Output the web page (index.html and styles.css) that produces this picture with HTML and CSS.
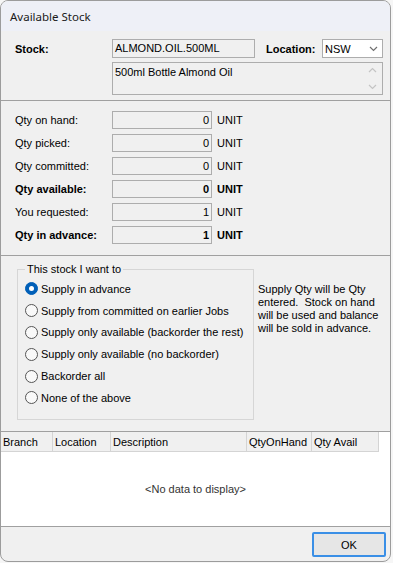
FILE: index.html
```html
<!DOCTYPE html>
<html>

<head>
    <title>Available Stock</title>
    <link rel="stylesheet" href="styles.css">
</head>

<body>
    <div class="window">
        <div class="titlebar">Available Stock</div>

        <div class="panel stock-panel">
            <div class="stock-row">
                <span class="label bold">Stock:</span>
                <div class="field stock-code">ALMOND.OIL.500ML</div>
                <span class="bold loc-label">Location:</span>
                <div class="select">
                    <span>NSW</span>
                    <svg width="9" height="6" viewBox="0 0 9 6"><polyline points="1,1 4.5,4.5 8,1" fill="none" stroke="#707070" stroke-width="1.2"/></svg>
                </div>
            </div>
            <div class="memo">
                <div class="memo-text">500ml Bottle Almond Oil</div>
                <div class="memo-scroll">
                    <svg width="9" height="6" viewBox="0 0 9 6"><polyline points="1,5 4.5,1.5 8,5" fill="none" stroke="#c4c4c4" stroke-width="1.2"/></svg>
                    <svg width="9" height="6" viewBox="0 0 9 6"><polyline points="1,1 4.5,4.5 8,1" fill="none" stroke="#c4c4c4" stroke-width="1.2"/></svg>
                </div>
            </div>
        </div>

        <div class="panel qty-panel">
            <div class="qty-row">
                <span class="label">Qty on hand:</span>
                <div class="field qty">0</div>
                <span class="unit">UNIT</span>
            </div>
            <div class="qty-row">
                <span class="label">Qty picked:</span>
                <div class="field qty">0</div>
                <span class="unit">UNIT</span>
            </div>
            <div class="qty-row">
                <span class="label">Qty committed:</span>
                <div class="field qty">0</div>
                <span class="unit">UNIT</span>
            </div>
            <div class="qty-row bold">
                <span class="label">Qty available:</span>
                <div class="field qty">0</div>
                <span class="unit">UNIT</span>
            </div>
            <div class="qty-row">
                <span class="label">You requested:</span>
                <div class="field qty">1</div>
                <span class="unit">UNIT</span>
            </div>
            <div class="qty-row bold">
                <span class="label">Qty in advance:</span>
                <div class="field qty">1</div>
                <span class="unit">UNIT</span>
            </div>
        </div>

        <div class="panel option-panel">
            <fieldset class="group">
                <legend>This stock I want to</legend>
                <ul class="options">
                    <li><span class="radio on"></span>Supply in advance</li>
                    <li><span class="radio"></span>Supply from committed on earlier Jobs</li>
                    <li><span class="radio"></span>Supply only available (backorder the rest)</li>
                    <li><span class="radio"></span>Supply only available (no backorder)</li>
                    <li><span class="radio"></span>Backorder all</li>
                    <li><span class="radio"></span>None of the above</li>
                </ul>
            </fieldset>
            <p class="hint">Supply Qty will be Qty<br>entered.&nbsp; Stock on hand<br>will be used and balance<br>will be sold in advance.</p>
        </div>

        <div class="grid">
            <div class="grid-head">
                <div class="col col-branch">Branch</div>
                <div class="col col-location">Location</div>
                <div class="col col-desc">Description</div>
                <div class="col col-onhand">QtyOnHand</div>
                <div class="col col-avail">Qty Avail</div>
            </div>
            <div class="grid-body">&lt;No data to display&gt;</div>
        </div>

        <div class="footer">
            <button class="ok">OK</button>
        </div>
    </div>
</body>

</html>
```

FILE: styles.css
```css
* {
    box-sizing: border-box;
}

body {
    margin: 0;
    background: #f6f6f6;
    font-family: "Liberation Sans", Arial, sans-serif;
    font-size: 11px;
    color: #000;
}

.bold {
    font-weight: bold;
}

.window {
    width: 391px;
    height: 562px;
    border: 1px solid #9c9c9c;
    border-radius: 8px;
    overflow: hidden;
    background: #f0f0f0;
    display: flex;
    flex-direction: column;
}

.titlebar {
    height: 30px;
    flex: none;
    background: #eef0f7;
    padding-left: 9px;
    display: flex;
    align-items: center;
    font-family: "Noto Sans", sans-serif;
    font-size: 11.5px;
    color: #1a1a1a;
}

.panel {
    flex: none;
    border-bottom: 1px solid #a0a0a0;
}

/* stock + location */
.stock-panel {
    height: 70px;
    padding: 8px 0 0 14px;
}

.stock-row {
    display: flex;
    align-items: center;
    height: 19px;
}

.label {
    width: 97px;
    flex: none;
}

.field {
    height: 19px;
    border: 1px solid #adadad;
    background: #f0f0f0;
    padding: 0 2px;
    line-height: 17px;
    white-space: nowrap;
}

.stock-code {
    width: 143px;
}

.loc-label {
    margin-left: 11px;
    width: 56px;
}

.select {
    width: 61px;
    height: 19px;
    background: #fff;
    border: 1px solid #adadad;
    display: flex;
    justify-content: space-between;
    align-items: center;
    padding: 0 4px 0 2px;
}

.memo {
    margin: 4px 0 0 97px;
    width: 271px;
    height: 33px;
    border: 1px solid #adadad;
    display: flex;
}

.memo-text {
    flex: 1;
    padding: 3px 2px 0;
    line-height: 13px;
}

.memo-scroll {
    width: 14px;
    display: flex;
    flex-direction: column;
    justify-content: space-between;
    padding: 4px 0 4px;
}

/* quantities */
.qty-panel {
    height: 155px;
    padding: 10px 0 0 14px;
    display: flex;
    flex-direction: column;
    gap: 5px;
}

.qty-row {
    display: flex;
    align-items: center;
    height: 18px;
}

.qty-row .field {
    height: 18px;
    line-height: 16px;
}

.qty {
    width: 100px;
    text-align: right;
}

.unit {
    margin-left: 5px;
}

/* options */
.option-panel {
    height: 176px;
    padding-left: 16px;
    display: flex;
    align-items: flex-start;
}

.group {
    margin: 7px 0 0;
    width: 237px;
    min-width: 0;
    border: 1px solid #d6d6d6;
    padding: 2px 0 10px 7px;
}

.group legend {
    padding: 0 2px;
    line-height: 13px;
}

.options {
    list-style: none;
    margin: 0;
    padding: 0;
}

.options li {
    height: 21.8px;
    display: flex;
    align-items: center;
    white-space: nowrap;
}

.radio {
    width: 13px;
    height: 13px;
    flex: none;
    margin-right: 3px;
    border-radius: 50%;
    border: 1px solid #555;
    background: #f9f9f9;
}

.radio.on {
    border-color: #005fb8;
    background: #005fb8;
    display: flex;
    align-items: center;
    justify-content: center;
}

.radio.on::after {
    content: "";
    width: 5px;
    height: 5px;
    border-radius: 50%;
    background: #fff;
}

.hint {
    margin: 27px 0 0 4px;
    line-height: 13px;
    white-space: nowrap;
}

/* grid */
.grid {
    flex: none;
    background: #fff;
}

.grid-head {
    display: flex;
    height: 20px;
}

.col {
    background: #f0f0f0;
    border-right: 1px solid #d4d4d4;
    border-bottom: 1px solid #d4d4d4;
    padding-left: 2px;
    display: flex;
    align-items: center;
}

.col-branch { width: 52px; }
.col-location { width: 58px; }
.col-desc { width: 136px; }
.col-onhand { width: 65px; }
.col-avail { width: 67px; }

.grid-body {
    height: 75px;
    border-bottom: 1px solid #a0a0a0;
    display: flex;
    align-items: center;
    justify-content: center;
    color: #333;
}

.footer {
    flex: 1;
    display: flex;
    justify-content: flex-end;
    align-items: flex-start;
    padding: 5px 4px 0 0;
}

.ok {
    width: 74px;
    height: 25px;
    border: 2px solid #3a8fe6;
    border-radius: 2px;
    background: #e6e6e6;
    font-family: "Liberation Sans", Arial, sans-serif;
    font-size: 11px;
    color: #000;
    padding: 0;
}
```
